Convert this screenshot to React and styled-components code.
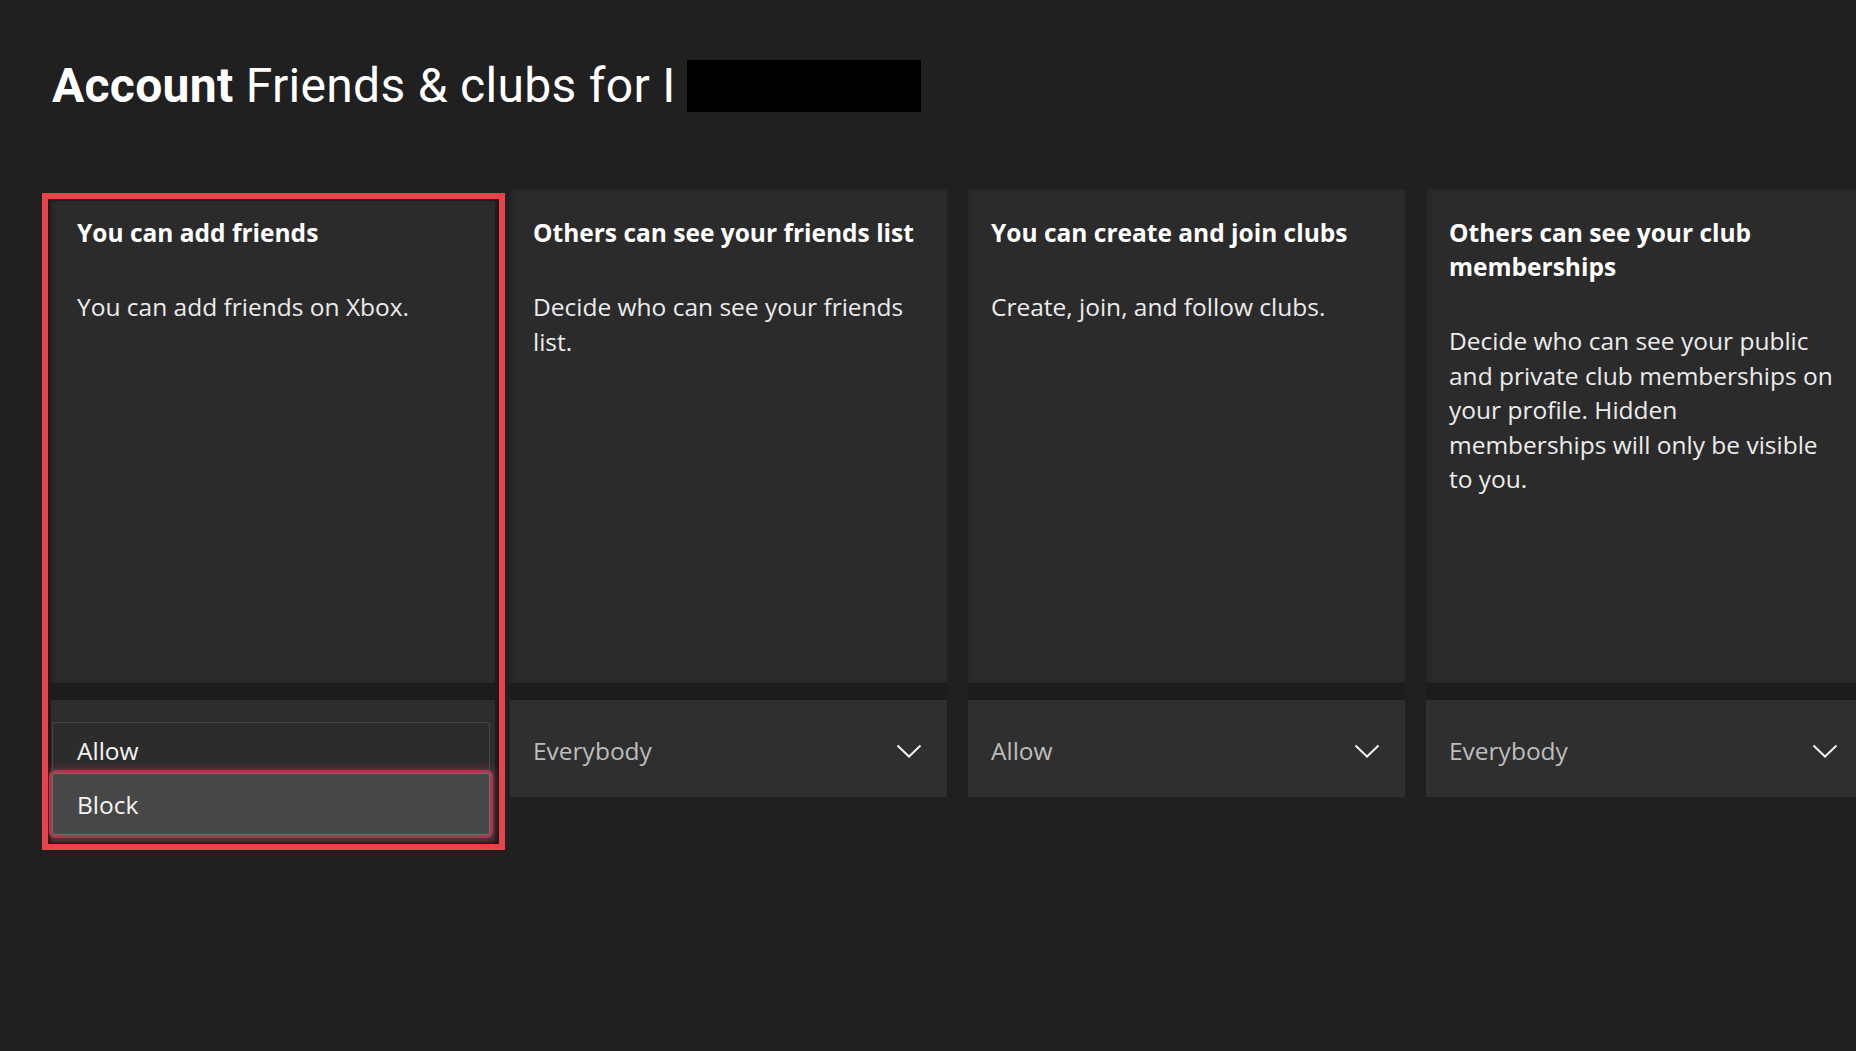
import { createGlobalStyle, styled } from "styled-components"

const GlobalStyle = createGlobalStyle`
    html, body {
        margin: 0;
        padding: 0;
        background-color: #202020;
        overflow: hidden;
    }
    body {
        width: 1856px;
        height: 1051px;
        font-family: "Open Sans", "Noto Sans", sans-serif;
        color: #fff;
    }
`

const settings = [
    {
        title: "Others can see your friends list",
        text: "Decide who can see your friends list.",
        value: "Everybody",
    },
    {
        title: "You can create and join clubs",
        text: "Create, join, and follow clubs.",
        value: "Allow",
    },
    {
        title: "Others can see your club memberships",
        text: "Decide who can see your public and private club memberships on your profile. Hidden memberships will only be visible to you.",
        value: "Everybody",
    },
]

const Chevron = () => (
    <svg width="26" height="14" viewBox="0 0 26 14" fill="none">
        <polyline points="1.5,1.5 13,12.5 24.5,1.5" stroke="#f2f2f2" strokeWidth="2" />
    </svg>
)

const SettingCard = ({ title, text, value }) => (
    <Card>
        <Panel $top={27} $left={23}>
            <CardTitle>{title}</CardTitle>
            <CardText>{text}</CardText>
        </Panel>
        <Band />
        <Dropdown>
            <DropdownValue>{value}</DropdownValue>
            <Chevron />
        </Dropdown>
    </Card>
)

export default function App() {
    return (
        <>
            <GlobalStyle />
            <Page>
                <Header>
                    <strong>Account</strong> Friends &amp; clubs for I
                    <Redacted />
                </Header>
                <Row>
                    <FocusFrame>
                        <Panel $top={15} $left={26} $focused>
                            <CardTitle>You can add friends</CardTitle>
                            <CardText>You can add friends on Xbox.</CardText>
                        </Panel>
                        <Band />
                        <OptionList>
                            <Option>Allow</Option>
                            <Option $selected>Block</Option>
                        </OptionList>
                    </FocusFrame>
                    {settings.map((s) => (
                        <SettingCard key={s.title} {...s} />
                    ))}
                </Row>
            </Page>
        </>
    )
}

const Page = styled.div`
    padding-top: 58px;
`

const Header = styled.h1`
    margin: 0;
    padding-left: 52px;
    font-family: Roboto, "Open Sans", sans-serif;
    font-size: 48px;
    line-height: 56px;
    font-weight: 400;
    letter-spacing: 0.3px;
    color: #fff;
    display: flex;
    align-items: center;
    white-space: pre;

    strong {
        font-weight: 700;
    }
`

const Redacted = styled.span`
    display: inline-block;
    width: 234px;
    height: 52px;
    margin-left: 11px;
    background-color: #000;
`

const Row = styled.div`
    display: flex;
    align-items: flex-start;
    gap: 21px;
    margin-top: 75px;
    padding-left: 42px;
`

const Card = styled.div`
    flex: 0 0 437px;
    display: flex;
    flex-direction: column;
`

const FocusFrame = styled.div`
    flex: 0 0 463px;
    box-sizing: border-box;
    margin-top: 4px;
    margin-right: -16px;
    border: 6px solid #e8444b;
    padding: 2px 4px 2px 3px;
    background-color: #1c1c1c;
    display: flex;
    flex-direction: column;
`

const Panel = styled.div`
    height: ${(p) => (p.$focused ? 482 : 494)}px;
    box-sizing: border-box;
    background-color: #2b2b2b;
    padding: ${(p) => p.$top}px 28px 0 ${(p) => p.$left}px;
    box-shadow: inset 3px 0 4px rgba(0, 0, 0, 0.15);
`

const CardTitle = styled.h2`
    margin: 0 0 40px;
    font-size: 24.5px;
    line-height: 34px;
    font-weight: 700;
    color: #fff;
`

const CardText = styled.p`
    margin: 0;
    font-size: 24.5px;
    line-height: 34.5px;
    font-weight: 400;
    color: #ececec;
`

const Band = styled.div`
    height: 17px;
    background-color: #1c1c1c;
`

const Dropdown = styled.div`
    height: 97px;
    box-sizing: border-box;
    background-color: #2f2f2f;
    padding: 4px 25px 0 23px;
    display: flex;
    align-items: center;
    justify-content: space-between;
`

const DropdownValue = styled.span`
    font-size: 24.5px;
    color: #bdbdbd;
`

const OptionList = styled.div`
    background-color: #2d2d2d;
    padding: 22px 5px 7px 1px;
    display: flex;
    flex-direction: column;
`

const Option = styled.div`
    box-sizing: border-box;
    height: ${(p) => (p.$selected ? 62 : 51)}px;
    padding: ${(p) => (p.$selected ? "0 0 0 24px" : "6px 0 0 24px")};
    display: flex;
    align-items: center;
    font-size: 24.5px;
    color: #f4f4f4;
    border-radius: 3px;
    background-color: ${(p) => (p.$selected ? "#474747" : "#2c2c2c")};
    border: 1px solid ${(p) => (p.$selected ? "#707070" : "#474747")};
    border-bottom-color: ${(p) => (p.$selected ? "#707070" : "transparent")};
    box-shadow: ${(p) =>
        p.$selected
            ? "0 0 0 3px #a8384f, 0 0 8px 4px rgba(220, 60, 90, 0.45)"
            : "none"};
    position: relative;
    z-index: ${(p) => (p.$selected ? 1 : 0)};
`
